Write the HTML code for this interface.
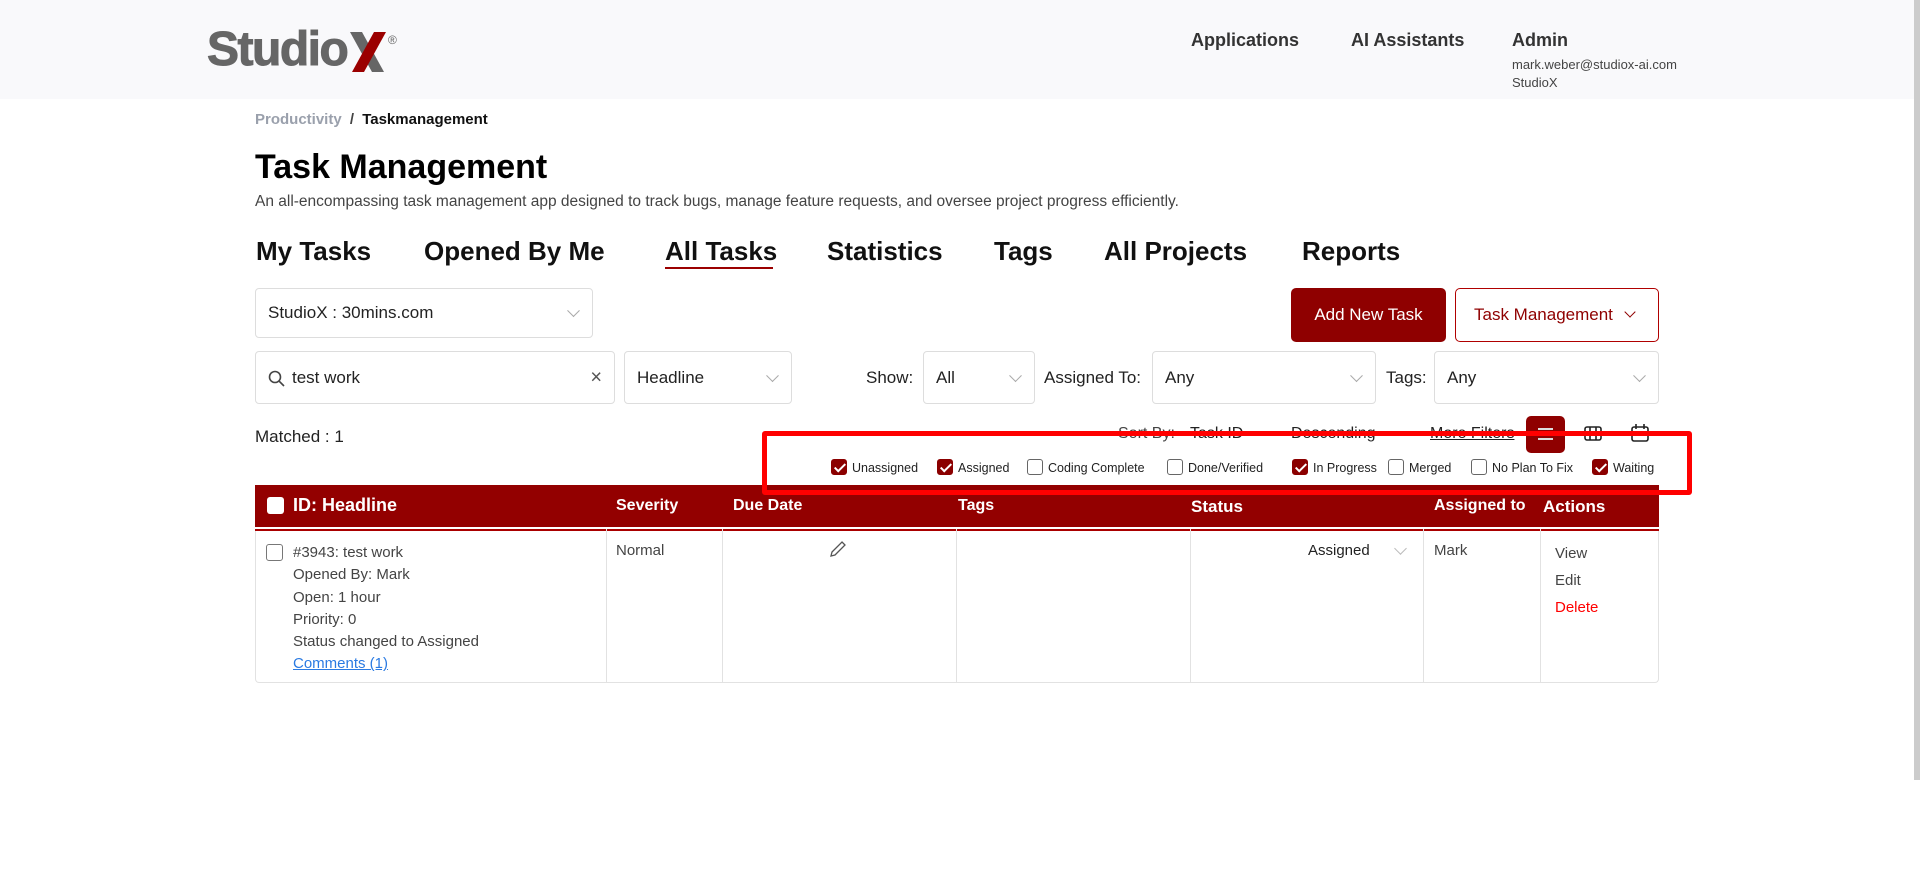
<!DOCTYPE html>
<html><head><meta charset="utf-8"><style>
*{box-sizing:border-box;margin:0;padding:0}
body{width:1920px;height:878px;position:relative;background:#fff;font-family:"Liberation Sans",sans-serif;color:#222;overflow:hidden}
.a{position:absolute;white-space:nowrap}
.hdr{position:absolute;left:0;top:0;width:1914px;height:99px;background:#f9f9fb}
.nav{font-size:18px;font-weight:bold;color:#333}
.tab{font-size:26px;font-weight:bold;color:#111;top:236px}
.box{position:absolute;border:1px solid #ddd;border-radius:4px;background:#fff;font-size:17px;color:#222}
.box span{position:absolute;left:12px;top:50%;transform:translateY(-50%)}
.chev{position:absolute;right:14px;top:50%;width:9px;height:9px;border-right:1.5px solid #aaa;border-bottom:1.5px solid #aaa;transform:translateY(-75%) rotate(45deg)}
.lbl{font-size:17px;color:#222;top:368px}
.cb{display:inline-block;width:16px;height:16px;border:1px solid #666;border-radius:3px;vertical-align:-3px;margin-right:5px;background:#fff;position:relative}
.cb.on{background:#8b0000;border-color:#8b0000}
.cb.on::after{content:"";position:absolute;left:5px;top:1px;width:4px;height:9px;border-right:2.5px solid #fff;border-bottom:2.5px solid #fff;transform:rotate(45deg)}
.chk{font-size:12.5px;top:459px;color:#222}
.th{font-size:16px;font-weight:bold;color:#fff;top:497px}
.td{font-size:15px;color:#444}
.vl{position:absolute;top:529px;height:154px;width:1px;background:#e2e2e2}
</style></head><body>
<div class="hdr"></div>
<div class="a" style="left:207px;top:22px;font-size:48px;font-weight:bold;color:#666;letter-spacing:-1.5px;-webkit-text-stroke:1px #666">Studio</div>
<svg class="a" style="left:350px;top:32px" width="60" height="40"><polygon points="0,0 12,0 34,40 22,40" fill="#666"/><polygon points="24,0 36,0 14,40 2,40" fill="#9b0000"/><text x="38" y="12" font-size="12" fill="#666" font-family="Liberation Sans">®</text></svg>
<div class="a nav" style="left:1191px;top:30px">Applications</div>
<div class="a nav" style="left:1351px;top:30px">AI Assistants</div>
<div class="a nav" style="left:1512px;top:30px">Admin</div>
<div class="a" style="left:1512px;top:57px;font-size:13px;color:#444">mark.weber@studiox-ai.com</div>
<div class="a" style="left:1512px;top:75px;font-size:13px;color:#444">StudioX</div>
<div style="position:absolute;right:0;top:0;width:6px;height:780px;background:#ccc"></div>

<div class="a" style="left:255px;top:111px;font-size:15px;font-weight:bold;color:#9aa0ac">Productivity <span style="color:#444;margin:0 4px">/</span> <span style="color:#111">Taskmanagement</span></div>
<div class="a" style="left:255px;top:148px;font-size:34px;font-weight:bold;color:#000">Task Management</div>
<div class="a" style="left:255px;top:193px;font-size:15.5px;color:#444">An all-encompassing task management app designed to track bugs, manage feature requests, and oversee project progress efficiently.</div>

<div class="a tab" style="left:256px">My Tasks</div>
<div class="a tab" style="left:424px">Opened By Me</div>
<div class="a tab" style="left:665px">All Tasks</div>
<div style="position:absolute;left:665px;top:267px;width:108px;height:2px;background:#9b0000"></div>
<div class="a tab" style="left:827px">Statistics</div>
<div class="a tab" style="left:994px">Tags</div>
<div class="a tab" style="left:1104px">All Projects</div>
<div class="a tab" style="left:1302px">Reports</div>

<div class="box" style="left:255px;top:288px;width:338px;height:50px"><span>StudioX : 30mins.com</span><i class="chev"></i></div>
<div style="position:absolute;left:1291px;top:288px;width:155px;height:54px;background:#8f0000;border-radius:5px;color:#fff;font-size:17px;text-align:center;line-height:54px">Add New Task</div>
<div style="position:absolute;left:1455px;top:288px;width:204px;height:54px;border:1px solid #b00000;border-radius:5px;color:#8f0000;font-size:17px;line-height:52px;padding-left:18px">Task Management <span style="display:inline-block;width:8px;height:8px;border-right:1.5px solid #8f0000;border-bottom:1.5px solid #8f0000;transform:rotate(45deg);margin:0 0 4px 8px"></span></div>

<div class="box" style="left:255px;top:351px;width:360px;height:53px"><svg style="position:absolute;left:12px;top:18px" width="18" height="18" fill="none" stroke="#444" stroke-width="1.6"><circle cx="7" cy="7" r="5.5"/><line x1="11" y1="11" x2="16" y2="16"/></svg><span style="left:36px">test work</span><span style="left:auto;right:12px;font-size:20px;color:#555">×</span></div>
<div class="box" style="left:624px;top:351px;width:168px;height:53px"><span>Headline</span><i class="chev"></i></div>
<div class="a lbl" style="left:866px">Show:</div>
<div class="box" style="left:923px;top:351px;width:112px;height:53px"><span>All</span><i class="chev"></i></div>
<div class="a lbl" style="left:1044px">Assigned To:</div>
<div class="box" style="left:1152px;top:351px;width:224px;height:53px"><span>Any</span><i class="chev"></i></div>
<div class="a lbl" style="left:1386px">Tags:</div>
<div class="box" style="left:1434px;top:351px;width:225px;height:53px"><span>Any</span><i class="chev"></i></div>

<div class="a" style="left:255px;top:427px;font-size:17px;color:#222">Matched : 1</div>
<div class="a" style="left:1118px;top:425px;font-size:16px;color:#444">Sort By:</div>
<div class="a" style="left:1190px;top:425px;font-size:16px;color:#222">Task ID</div>
<div class="a" style="left:1291px;top:425px;font-size:16px;color:#222">Descending</div>
<div class="a" style="left:1430px;top:425px;font-size:16px;color:#222;text-decoration:underline">More Filters</div>
<div style="position:absolute;left:1526px;top:416px;width:39px;height:37px;background:#8f0000;border-radius:5px"><div style="position:absolute;left:12px;top:12px;width:15px;height:2px;background:#ddd;box-shadow:0 5px 0 #ddd,0 10px 0 #ddd"></div></div>
<svg class="a" style="left:1584px;top:426px" width="18" height="16" fill="none" stroke="#222" stroke-width="1.6"><rect x="1" y="1" width="16" height="13" rx="2"/><line x1="6" y1="1" x2="6" y2="14"/><line x1="12" y1="1" x2="12" y2="14"/></svg>
<svg class="a" style="left:1631px;top:424px" width="18" height="18" fill="none" stroke="#222" stroke-width="1.6"><rect x="1" y="3" width="16" height="14" rx="2"/><line x1="5" y1="0" x2="5" y2="5"/><line x1="13" y1="0" x2="13" y2="5"/></svg>

<div class="a chk" style="left:831px"><i class="cb on"></i>Unassigned</div>
<div class="a chk" style="left:937px"><i class="cb on"></i>Assigned</div>
<div class="a chk" style="left:1027px"><i class="cb"></i>Coding Complete</div>
<div class="a chk" style="left:1167px"><i class="cb"></i>Done/Verified</div>
<div class="a chk" style="left:1292px"><i class="cb on"></i>In Progress</div>
<div class="a chk" style="left:1388px"><i class="cb"></i>Merged</div>
<div class="a chk" style="left:1471px"><i class="cb"></i>No Plan To Fix</div>
<div class="a chk" style="left:1592px"><i class="cb on"></i>Waiting</div>

<div style="position:absolute;left:255px;top:529px;width:1404px;height:154px;border:1px solid #e2e2e2;border-top:none;border-radius:0 0 4px 4px"></div>
<div style="position:absolute;left:255px;top:485px;width:1404px;height:44px;background:#930000;border-bottom:2px solid #fff;box-shadow:0 2px 0 #a00"></div>
<div style="position:absolute;left:267px;top:497px;width:17px;height:17px;background:#fff;border-radius:3px"></div>
<div class="a th" style="left:293px;font-size:18px;top:495px">ID: Headline</div>
<div class="a th" style="left:616px">Severity</div>
<div class="a th" style="left:733px">Due Date</div>
<div class="a th" style="left:958px">Tags</div>
<div class="a th" style="left:1191px;font-size:17px">Status</div>
<div class="a th" style="left:1434px">Assigned to</div>
<div class="a th" style="left:1543px;font-size:17px">Actions</div>

<div style="position:absolute;left:762px;top:431px;width:930px;height:64px;border:5px solid #ff0000;border-radius:3px"></div>

<div class="vl" style="left:606px"></div><div class="vl" style="left:722px"></div><div class="vl" style="left:956px"></div><div class="vl" style="left:1190px"></div><div class="vl" style="left:1423px"></div><div class="vl" style="left:1540px"></div>
<div style="position:absolute;left:266px;top:544px;width:17px;height:17px;border:1px solid #777;border-radius:3px"></div>
<div class="a td" style="left:293px;top:542px;line-height:22.3px">#3943: test work<br>Opened By: Mark<br>Open: 1 hour<br>Priority: 0<br>Status changed to Assigned<br><span style="color:#2a7ae2;text-decoration:underline">Comments (1)</span></div>
<div class="a td" style="left:616px;top:542px">Normal</div>
<svg class="a" style="left:830px;top:541px" width="16" height="16" fill="none" stroke="#555" stroke-width="1.3"><path d="M12 1l3 3L5 14l-4 1 1-4z"/></svg>
<div class="a td" style="left:1308px;top:542px;color:#222">Assigned</div>
<div style="position:absolute;left:1396px;top:544px;width:9px;height:9px;border-right:1.5px solid #bbb;border-bottom:1.5px solid #bbb;transform:rotate(45deg)"></div>
<div class="a td" style="left:1434px;top:542px">Mark</div>
<div class="a td" style="left:1555px;top:540px;line-height:27px">View<br>Edit<br><span style="color:#f00">Delete</span></div>
</body></html>
